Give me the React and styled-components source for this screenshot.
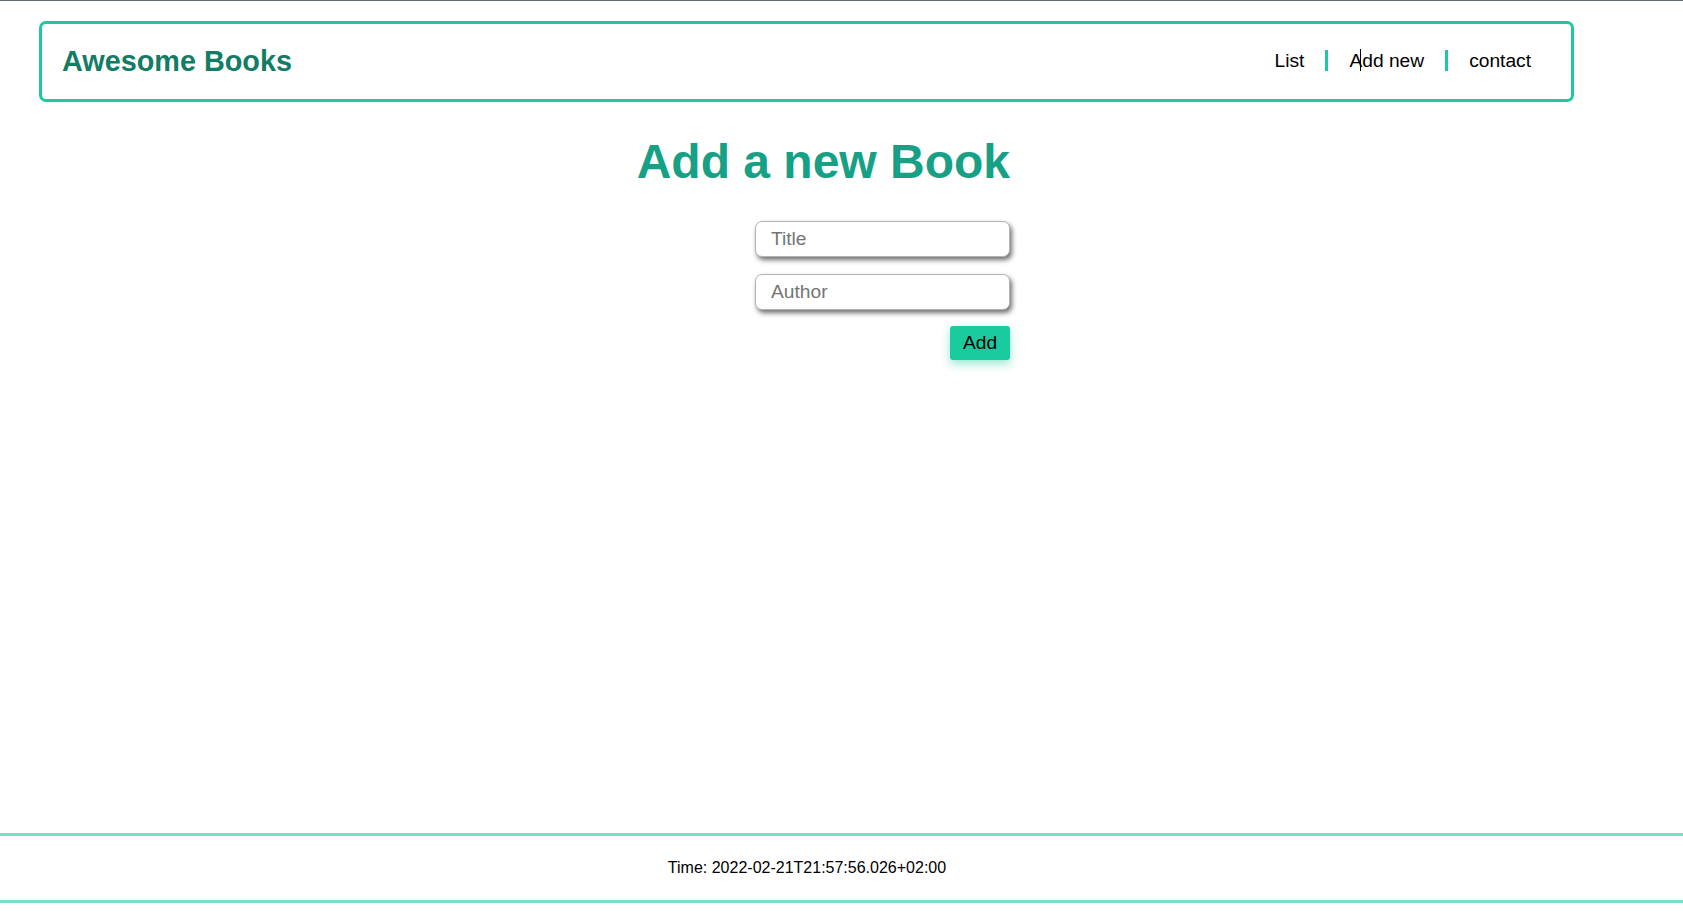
import React from "react";
import styled, { createGlobalStyle } from "styled-components";

const Global = createGlobalStyle`
  * { box-sizing: border-box; }
  html, body { margin: 0; padding: 0; background: #fff; }
  body {
    font-family: "Liberation Sans", Arial, sans-serif;
    color: #000;
    border-top: 1px solid #5f6d75;
  }
`;

const Page = styled.div`
  min-height: calc(100vh - 1px);
  display: flex;
  flex-direction: column;
`;

const Header = styled.header`
  width: 1535px;
  height: 81px;
  margin: 20px 0 0 39px;
  border: 3px solid #1cc9a1;
  border-radius: 7px;
  display: flex;
  align-items: center;
  justify-content: space-between;
  padding: 0 20px;
`;

const Brand = styled.h2`
  margin: 0;
  font-size: 28.8px;
  font-weight: 700;
  color: #137c64;
`;

const NavList = styled.ul`
  list-style: none;
  margin: 0 0 2px;
  padding: 0;
  display: flex;
  align-items: center;
`;

const NavItem = styled.li`
  position: relative;
  padding: 0 ${(p) => (p.$last ? "20px" : "21px")} 0 ${(p) => (p.$first ? "20px" : "21px")};
  font-size: 19.2px;
  line-height: 21px;
  border-left: ${(p) => (p.$first ? "none" : "3px solid #1cc9a1")};
`;

const Caret = styled.span`
  position: absolute;
  left: 32px;
  top: -1px;
  width: 1px;
  height: 22px;
  background: #000;
`;

const Main = styled.main`
  flex: 1;
  width: 1010px;
  display: flex;
  flex-direction: column;
  align-items: flex-end;
`;

const Heading = styled.h1`
  margin: 32px 0 0;
  font-size: 48px;
  font-weight: 700;
  line-height: 55px;
  color: #16a085;
`;

const Form = styled.form`
  margin-top: 32px;
  display: flex;
  flex-direction: column;
  align-items: flex-end;
  gap: 16.5px;
`;

const Input = styled.input`
  width: 255px;
  height: 36px;
  border: 1px solid #b3b3b3;
  border-radius: 7px;
  padding: 0 15px;
  font-family: "Liberation Sans", Arial, sans-serif;
  font-size: 19.2px;
  color: #000;
  background: #fff;
  box-shadow: 2px 3px 5px #6f6f6f;
  outline: none;
  &::placeholder { color: #757575; }
`;

const Button = styled.button`
  width: 60px;
  height: 34px;
  border: none;
  border-radius: 3px;
  background: #1bcba0;
  color: #000;
  font-family: "Liberation Sans", Arial, sans-serif;
  font-size: 19.2px;
  padding: 0;
  box-shadow: 0 4px 10px rgba(27, 203, 160, 0.45);
  cursor: pointer;
`;

const Footer = styled.footer`
  margin-bottom: 18px;
  height: 70px;
  border-top: 3px solid #76e0c9;
  border-bottom: 3px solid #76e0c9;
  display: flex;
  align-items: center;
  justify-content: center;
  padding-right: 69px;
  font-size: 16px;
`;

export default function App() {
  return (
    <>
      <Global />
      <Page>
        <Header>
          <Brand>Awesome Books</Brand>
          <nav>
            <NavList>
              <NavItem $first>List</NavItem>
              <NavItem>
                Add new
                <Caret />
              </NavItem>
              <NavItem $last>contact</NavItem>
            </NavList>
          </nav>
        </Header>
        <Main>
          <Heading>Add a new Book</Heading>
          <Form onSubmit={(e) => e.preventDefault()}>
            <Input type="text" placeholder="Title" />
            <Input type="text" placeholder="Author" />
            <Button type="submit">Add</Button>
          </Form>
        </Main>
        <Footer>Time: 2022-02-21T21:57:56.026+02:00</Footer>
      </Page>
    </>
  );
}
